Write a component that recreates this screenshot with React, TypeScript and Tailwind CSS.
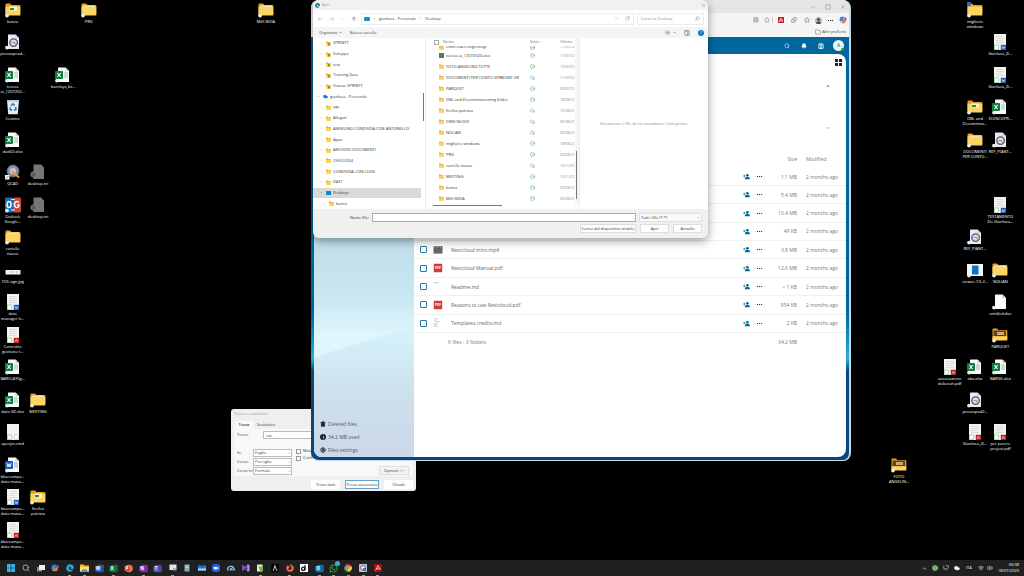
import React from 'react';
import {
  ArrowLeft,
  ArrowRight,
  ArrowUp,
  Bell,
  ChevronDown,
  ChevronRight,
  ChevronUp,
  CircleCheck,
  Cloud,
  Contact,
  Folder,
  LayoutGrid,
  List,
  Minus,
  PanelRight,
  Puzzle,
  RotateCw,
  Search,
  Settings,
  Square,
  Star,
  Trash2,
  Volume2,
  Wifi,
  X,
} from 'lucide-react';
import { FaFirefoxBrowser, FaEdge, FaWhatsapp } from 'react-icons/fa';

type IconKind =
  | 'folder'
  | 'folderDoc'
  | 'folderPhoto'
  | 'folderSync'
  | 'cad'
  | 'excel'
  | 'word'
  | 'docWord'
  | 'docPdf'
  | 'cmd'
  | 'blank'
  | 'bin'
  | 'qcad'
  | 'outlook'
  | 'ini'
  | 'strip'
  | 'viewer';

interface DesktopItem {
  col: number;
  row: number;
  kind: IconKind;
  label: string[];
}

const desktopItems: DesktopItem[] = [
  { col: 1, row: 1, kind: 'folderDoc', label: ['banca'] },
  { col: 4, row: 1, kind: 'folder', label: ['PRG'] },
  { col: 11, row: 1, kind: 'folder', label: ['MiH-NIDA'] },
  { col: 1, row: 2, kind: 'cad', label: ['provaspcad...'] },
  { col: 1, row: 3, kind: 'excel', label: ['teresa', 'ai_1207202...'] },
  { col: 3, row: 3, kind: 'excel', label: ['barclays_bc...'] },
  { col: 1, row: 4, kind: 'bin', label: ['Cestino'] },
  { col: 1, row: 5, kind: 'excel', label: ['dati02.xlsx'] },
  { col: 1, row: 6, kind: 'qcad', label: ['QCAD'] },
  { col: 2, row: 6, kind: 'ini', label: ['desktop.ini'] },
  { col: 1, row: 7, kind: 'outlook', label: ['Outlook', 'Google...'] },
  { col: 2, row: 7, kind: 'ini', label: ['desktop.ini'] },
  { col: 1, row: 8, kind: 'folder', label: ['cartelle', 'nuove'] },
  { col: 1, row: 9, kind: 'strip', label: ['1DS sign.jpg'] },
  { col: 1, row: 10, kind: 'docWord', label: ['data', 'manager ti...'] },
  { col: 1, row: 11, kind: 'docPdf', label: ['Contratto', 'gestione t...'] },
  { col: 1, row: 12, kind: 'excel', label: ['BARCLAYSg...'] },
  { col: 1, row: 13, kind: 'excel', label: ['data GZ.xlsx'] },
  { col: 2, row: 13, kind: 'folder', label: ['MEETING'] },
  { col: 1, row: 14, kind: 'cmd', label: ['specjvc.cmd'] },
  { col: 1, row: 15, kind: 'word', label: ['bluecompa...', 'data mana...'] },
  { col: 1, row: 16, kind: 'docWord', label: ['bluecompa...', 'data mana...'] },
  { col: 2, row: 16, kind: 'folderDoc', label: ['firefox', 'patrizia'] },
  { col: 1, row: 17, kind: 'docPdf', label: ['bluecompa...', 'data mana...'] },
  { col: 39, row: 1, kind: 'folderSync', label: ['migliorie', 'windows'] },
  { col: 40, row: 2, kind: 'docWord', label: ['Gianluca_Zi...'] },
  { col: 40, row: 3, kind: 'docWord', label: ['Gianluca_Zi...'] },
  { col: 39, row: 4, kind: 'folderDoc', label: ['DBL and', 'Decommiss...'] },
  { col: 40, row: 4, kind: 'excel', label: ['ELENCOPR...'] },
  { col: 39, row: 5, kind: 'folder', label: ['DOCUMENTI', 'PER CONTO...'] },
  { col: 40, row: 5, kind: 'cad', label: ['REF_PIANT...'] },
  { col: 40, row: 7, kind: 'docWord', label: ['TESTAMENTO', 'Zio Gianluca...'] },
  { col: 39, row: 8, kind: 'cad', label: ['REF_PIANT...'] },
  { col: 39, row: 9, kind: 'viewer', label: ['viewer-7.6.2...'] },
  { col: 40, row: 9, kind: 'folder', label: ['NOLIAN'] },
  { col: 40, row: 10, kind: 'blank', label: ['untitled.dxs'] },
  { col: 40, row: 11, kind: 'folderPhoto', label: ['PARQUET'] },
  { col: 38, row: 12, kind: 'docPdf', label: ['associazione', 'deborah.pdf'] },
  { col: 39, row: 12, kind: 'excel', label: ['xba.xlsx'] },
  { col: 40, row: 12, kind: 'excel', label: ['BARGE.xlsx'] },
  { col: 39, row: 13, kind: 'cad', label: ['provaspad2...'] },
  { col: 39, row: 14, kind: 'docPdf', label: ['Gianluca_Zi...'] },
  { col: 40, row: 14, kind: 'docPdf', label: ['per parere', 'project.pdf'] },
  { col: 36, row: 15, kind: 'folderPhoto', label: ['FOTO', 'ANGELIN...'] },
];

const treeItems = [
  { name: 'SPRINTT', icon: 'shared', chevron: true },
  { name: 'Sviluppo', icon: 'shared', chevron: true },
  { name: 'test', icon: 'shared', chevron: true },
  { name: 'Training-Sara', icon: 'shared', chevron: false },
  { name: 'Visioso SPRINTT', icon: 'shared', chevron: true },
  { name: 'gianluca - Personale', icon: 'cloud', chevron: true },
  { name: 'age', icon: 'folder', chevron: true },
  { name: 'Allegati', icon: 'folder', chevron: true },
  { name: 'ANGELINO CONDIVISA CON ANTONELLO', icon: 'folder', chevron: true },
  { name: 'Apps', icon: 'folder', chevron: true },
  { name: 'ARCHIVIO DOCUMENTI', icon: 'folder', chevron: true },
  { name: 'CHILE2024', icon: 'folder', chevron: true },
  { name: 'CONDIVISA CON LUIGI', icon: 'folder', chevron: true },
  { name: 'DATI', icon: 'folder', chevron: true },
  { name: 'Desktop', icon: 'desktop', chevron: true },
  { name: 'banca', icon: 'folder', chevron: true },
];

const dialogFiles = [
  { name: 'teresa ai_12072023.xlsx', synced: true, date: '11/07/2' },
  { name: 'FOTO ANGELINO TUTTE', synced: true, date: '10/07/2' },
  { name: 'DOCUMENTI PER CONTO VERMONT-VR', synced: false, date: '11/07/2' },
  { name: 'PARQUET', synced: true, date: '06/07/2' },
  { name: 'DBL and Decommissioning folder', synced: true, date: '18/06/2' },
  { name: 'firefox patrizia', synced: false, date: '15/06/2' },
  { name: 'DWG NUOVI', synced: false, date: '05/06/2' },
  { name: 'NOLIAN', synced: false, date: '05/06/2' },
  { name: 'migliorie windows', synced: true, date: '18/06/2' },
  { name: 'PRG', synced: true, date: '02/06/2' },
  { name: 'cartelle nuove', synced: false, date: '15/12/2' },
  { name: 'MEETING', synced: true, date: '12/12/2' },
  { name: 'banca', synced: true, date: '23/06/2' },
  { name: 'MiH-NIDA', synced: true, date: '05/06/2' },
];

const cloudFiles = [
  { id: 1, name: '', kind: 'folder', size: '1.1 MB' },
  { id: 2, name: '', kind: 'folder', size: '5.4 MB' },
  { id: 3, name: '', kind: 'folder', size: '10.4 MB' },
  { id: 4, name: '', kind: 'text', size: '49 KB' },
  { id: 5, name: 'Nextcloud intro.mp4', kind: 'video', size: '3.8 MB' },
  { id: 6, name: 'Nextcloud Manual.pdf', kind: 'pdf', size: '12.6 MB' },
  { id: 7, name: 'Readme.md', kind: 'readme', size: '< 1 KB' },
  { id: 8, name: 'Reasons to use Nextcloud.pdf', kind: 'pdf', size: '954 KB' },
  { id: 9, name: 'Templates credits.md', kind: 'text', size: '2 KB' },
];

const DesktopIcon: React.FC<{ kind: IconKind }> = ({ kind }) => {
  const isFolder = kind.startsWith('folder');
  const isPage = ['cad', 'excel', 'word', 'blank'].includes(kind);
  const isDoc = ['docWord', 'docPdf', 'cmd'].includes(kind);

  return (
    <svg viewBox="0 0 16 16" className="size-4 shrink-0" aria-hidden="true">
      {isFolder && (
        <>
          <path d="M0.5 2.5Q0.5 1.5 1.5 1.5H5L6.5 3H14.5Q15.3 3 15.3 4V12H0.5Z" fill="#e8a01c" />
          {kind === 'folder' && <path d="M2 3.5H14V8H2Z" fill="#f4ead2" />}
          {kind === 'folderPhoto' && <path d="M1.5 3.5H14V9H1.5Z" fill="#5b4228" />}
          <path d={kind === 'folderPhoto' ? 'M0.5 9.5H15.3V13.5H0.5Z' : 'M0.5 4.6H15.3V13.5H0.5Z'} fill="#fcd462" />
          {kind === 'folderPhoto' && <path d="M5 5H12V8H5Z" fill="#c9ab82" />}
          {kind === 'folderDoc' && (
            <>
              <path d="M4.5 4.5H12V8.5H4.5Z" fill="#f5f1dc" />
              <path d="M5 6H9V8H5Z" fill="#288f55" />
            </>
          )}
          {kind === 'folderSync' && <circle cx="2" cy="2" r="2.2" fill="#1976d2" />}
        </>
      )}
      {isPage && (
        <path d="M3 1Q3 0.5 3.5 0.5H10.5L14 4V14.5Q14 15 13.5 15H3.5Q3 15 3 14.5Z" fill={kind === 'cad' ? '#e9e9ef' : '#fbfbfb'} />
      )}
      {isPage && <path d="M10.5 0.5V4H14Z" fill="#c9cdd0" />}
      {kind === 'excel' && (
        <>
          <path d="M9 6H13M9 8H13M9 10H13" stroke="#8cc5a6" strokeWidth="1" />
          <rect x="0" y="4" width="8" height="8" rx="0.8" fill="#107c41" />
          <path d="M2.4 6L5.6 10M5.6 6L2.4 10" stroke="#fff" strokeWidth="1.1" />
        </>
      )}
      {kind === 'word' && (
        <>
          <path d="M9 6H13M9 8H13M9 10H13" stroke="#7fa4d8" strokeWidth="1" />
          <rect x="0" y="4" width="8" height="8" rx="0.8" fill="#185abd" />
          <path d="M1.8 6L2.9 10L4 6.8L5.1 10L6.2 6" stroke="#fff" strokeWidth="0.9" fill="none" />
        </>
      )}
      {kind === 'cad' && (
        <>
          <circle cx="8.6" cy="8.6" r="3.8" fill="#d8dcea" stroke="#4d5685" strokeWidth="1.3" />
          <path d="M6.5 8.5H10.5M9 9L12 12" stroke="#c78a55" strokeWidth="0.9" />
        </>
      )}
      {isDoc && (
        <>
          <rect x="2" y="0" width="12" height="16" fill="#f3f3f1" />
          {kind !== 'cmd' && (
            <path d="M4 2.5H11M4 4.5H12M4 6.5H10M4 8.5H12" stroke="#c9cbcd" strokeWidth="0.6" />
          )}
          <rect x="2.5" y="11" width="4" height="4.5" fill="#fff" stroke="#79bf8c" strokeWidth="0.6" />
          {kind === 'docWord' && <rect x="8.8" y="10.8" width="5.2" height="5.2" fill="#1e62c4" />}
          {kind === 'docPdf' && <rect x="8.8" y="10.8" width="5.2" height="5.2" fill="#c5161d" />}
          {kind === 'docWord' && <path d="M10 12.2L10.8 14.6L11.4 13L12 14.6L12.8 12.2" stroke="#fff" strokeWidth="0.5" fill="none" />}
          {kind === 'docPdf' && <path d="M9.8 15L11.4 12L13 14.3L10.4 13.8" stroke="#fff" strokeWidth="0.5" fill="none" />}
          {kind === 'cmd' && <path d="M9.5 10.5H12L13.2 12V15.3H9.5Z" fill="#fff" stroke="#a8acb0" strokeWidth="0.5" />}
        </>
      )}
      {kind === 'bin' && (
        <>
          <path d="M2 1H14L12.8 15.2H3.2Z" fill="#e3ebf0" />
          <path d="M2 1H14V2.4H2.2Z" fill="#b8c8d2" />
          <path d="M6 6.8L8 4.8L9.7 6.6M10.6 8L11 10.5L9 11.2M7.2 11.2L5 10.4L5.4 8.4" stroke="#1779d4" strokeWidth="1.5" fill="none" />
        </>
      )}
      {kind === 'qcad' && (
        <>
          <circle cx="8" cy="7" r="6" fill="#878ea6" stroke="#5a6180" strokeWidth="1" />
          <circle cx="8" cy="7" r="3" fill="#c2c8da" />
          <path d="M7 7L14 13.5" stroke="#e39b35" strokeWidth="2" />
          <rect x="0" y="11" width="4.5" height="4.5" fill="#fff" />
          <path d="M1 14.5L3.4 12" stroke="#1a67c2" strokeWidth="0.8" />
        </>
      )}
      {kind === 'outlook' && (
        <>
          <rect x="0" y="0.5" width="8" height="15" rx="1" fill="#1670b8" />
          <rect x="8" y="0.5" width="8" height="15" rx="1" fill="#cf4734" />
          <ellipse cx="4" cy="7.5" rx="2" ry="3" fill="none" stroke="#fff" strokeWidth="1.5" />
          <path d="M13.8 5.6A2.4 3 0 1 0 13.8 9.4V7.8H12.3" fill="none" stroke="#fff" strokeWidth="1.4" />
          <path d="M6 2.5H10M6 13H10" stroke="#fff" strokeWidth="0.9" />
        </>
      )}
      {kind === 'ini' && (
        <>
          <path d="M3.5 0.5H11L14 3.5V15H3.5Z" fill="#767676" />
          <circle cx="3.6" cy="10.5" r="2.8" fill="#5c5c5c" stroke="#8b8b8b" strokeWidth="0.7" />
        </>
      )}
      {kind === 'strip' && (
        <>
          <rect x="0.5" y="8" width="15" height="4.5" fill="#f0f3ef" />
          <path d="M5 10H7M8 10H10M11 10H13" stroke="#8c9a8f" strokeWidth="0.7" />
        </>
      )}
      {kind === 'viewer' && (
        <>
          <rect x="0" y="2" width="16" height="12" fill="#f4f7fa" />
          <rect x="5" y="3.5" width="6.5" height="9" fill="#1272c8" />
        </>
      )}
      {!isDoc && !['bin', 'qcad', 'ini', 'strip'].includes(kind) && <circle cx="2" cy="13.6" r="1.9" fill="#dff2e3" />}
    </svg>
  );
};

const SmallFolder: React.FC<{ shared?: boolean }> = ({ shared }) => (
  <svg viewBox="0 0 12 12" className="size-[5px] shrink-0" aria-hidden="true">
    <path d="M0 1H4.5L6 3H12V11H0Z" fill="#eab02f" />
    <path d="M0 4.5H12V11H0Z" fill="#fbd35c" />
    {shared && <path d="M5 5H9V11H5Z" fill="#6f8d34" />}
  </svg>
);

const ShareIcon = () => (
  <svg viewBox="0 0 24 24" className="size-[7px] fill-[#00679e]" aria-hidden="true">
    <circle cx="15" cy="8" r="4.5" />
    <path d="M6.5 21V18C6.5 12.5 23.5 12.5 23.5 18V21ZM0 9H3V6H5.5V9H8.5V11.5H5.5V14.5H3V11.5H0Z" />
  </svg>
);

const FileIcon: React.FC<{ kind: string }> = ({ kind }) => (
  <svg viewBox="0 0 10 10" className="size-[10px]" aria-hidden="true">
    {kind === 'folder' && <path d="M0 1H4L5 2.5H10V9H0Z" fill="#00679e" />}
    {kind === 'video' && (
      <>
        <rect x="0.5" y="1" width="9" height="7.6" fill="#666" />
        <path d="M1.4 1L2.4 2.6M4 1L5 2.6M6.6 1L7.6 2.6" stroke="#ddd" strokeWidth="0.8" />
      </>
    )}
    {kind === 'pdf' && (
      <>
        <rect x="0.8" y="0.8" width="8.4" height="8.4" rx="0.6" fill="#d5383b" />
        <text x="5" y="6.2" textAnchor="middle" fontSize="3.2" fontWeight="700" fill="#fff">PDF</text>
      </>
    )}
    {kind === 'readme' && <path d="M1 0.7H6" stroke="#aaa" strokeWidth="0.6" />}
    {kind === 'text' && (
      <path d="M1 0.8H5M1 2.5H3M3.5 3.5H6.5M1 5H5M1 6.6H4M1 8.2H5.5" stroke="#aaa" strokeWidth="0.6" />
    )}
  </svg>
);

const Dots: React.FC = () => (
  <svg viewBox="0 0 7 3" className="h-[3px] w-[7px]" aria-hidden="true">
    <path d="M1 1.5h1.1M3 1.5h1.1M5 1.5h1.1" stroke="#333" strokeWidth="1.1" />
  </svg>
);

const CopilotIcon = () => (
  <svg viewBox="0 0 10 10" className="size-2" aria-hidden="true">
    <path d="M3 1H6.5L4.5 7L1.5 6.5Q0 6.5 0.7 4.5L1.5 2Q2 1 3 1Z" fill="#2b8ff0" />
    <path d="M7 1.5H8.3Q9.8 1.8 9.3 4L8.6 6.5L6 6Z" fill="#a455d8" />
    <path d="M5.5 4L8.6 6Q8 9 6.8 9H3.5L5 4.5Z" fill="#f07844" />
    <path d="M1.5 6.5L4 6.8L3.4 9Q1.8 9 1.5 6.5Z" fill="#f3c33d" />
  </svg>
);

const ChromeIcon = () => (
  <svg viewBox="0 0 8 8" className="size-2" aria-hidden="true">
    <path d="M4 4L0.54 2A4 4 0 0 1 7.46 2Z" fill="#e33b2e" />
    <path d="M4 4L7.46 2A4 4 0 0 1 4 8Z" fill="#fbc116" />
    <path d="M4 4V8A4 4 0 0 1 0.54 2Z" fill="#2ca24c" />
    <circle cx="4" cy="4" r="1.6" fill="#2f7de9" stroke="#fff" strokeWidth="0.6" />
  </svg>
);

const BrowserWindow = () => (
  <section
    aria-label="Browser"
    className="absolute top-0 right-[173px] bottom-[115px] left-[311px] flex flex-col overflow-hidden rounded-lg border-r-2 border-b border-[#c4dbe7] bg-[#f5f5f5]"
  >
    <div className="flex h-[13px] shrink-0 items-center justify-end gap-[9px] bg-[#e6e6e6] pr-[3px] text-[#858585]">
      <button aria-label="Minimize"><Minus className="size-[6px]" strokeWidth={1.5} /></button>
      <button aria-label="Maximize"><Square className="size-[6px]" strokeWidth={2} /></button>
      <button aria-label="Close"><X className="size-[6px]" strokeWidth={2} /></button>
    </div>
    <div className="flex h-[14px] shrink-0 items-center justify-end gap-[5px] pr-0.5 text-[#555]">
      <button aria-label="Apps"><LayoutGrid className="size-[6px]" strokeWidth={1.5} /></button>
      <button aria-label="Add to favorites" className="border-r border-[#ccc] pr-0.5">
        <Star className="size-[6px]" strokeWidth={1.5} />
      </button>
      <button aria-label="Acrobat" className="flex size-[6px] items-center justify-center bg-[#c91c1c]">
        <svg viewBox="0 0 6 6" className="size-[6px]"><path d="M1 5L3 1L4.8 4.2L2 3.6" stroke="#fff" strokeWidth="0.7" fill="none" /></svg>
      </button>
      <button aria-label="Extensions" className="ml-0.5"><Puzzle className="size-[6px]" /></button>
      <button aria-label="Favorites" className="ml-0.5"><Star className="size-[6px]" /></button>
      <button aria-label="Profile" className="flex size-[7px] items-end justify-center overflow-hidden rounded-full bg-[#bbb]">
        <svg viewBox="0 0 8 8" className="size-[7px]"><circle cx="4" cy="3" r="1.6" fill="#444" /><path d="M1 8Q1 5 4 5T7 8Z" fill="#444" /></svg>
      </button>
      <button aria-label="More"><Dots /></button>
      <button aria-label="Copilot"><CopilotIcon /></button>
    </div>
    <div className="flex h-[10px] shrink-0 items-center justify-end gap-px pr-[3px]">
      <Folder className="size-[6px] text-[#333]" strokeWidth={1.5} />
      <a href="#favorites" className="text-[4px] text-[#333]">Altri preferiti</a>
    </div>

    <div className="flex min-h-0 flex-1 flex-col bg-linear-to-b from-[#00679e] from-65% via-[#22b2dc] via-76% to-[#084680] to-79% px-[3px] pb-[3px]">
      <header className="flex h-[17px] shrink-0 items-center justify-end gap-[11px] bg-[#00679e] pr-0.5 text-white">
        <button aria-label="Search"><Search className="size-[6px]" /></button>
        <button aria-label="Notifications"><Bell className="size-[6px] fill-white" /></button>
        <button aria-label="Contacts"><Contact className="size-[6px]" strokeWidth={3} /></button>
        <button
          aria-label="Account"
          className="relative -ml-0.5 flex size-[11px] items-center justify-center rounded-full bg-[#e8f2f8] text-[5px] text-[#00679e]"
        >
          A
          <span className="absolute right-0 bottom-0 size-[3px] rounded-full bg-[#3a8f32]" />
        </button>
      </header>

      <div className="flex min-h-0 flex-1 overflow-hidden rounded-lg bg-white">
        <nav className="relative flex w-[100px] shrink-0 flex-col justify-end gap-[5px] pb-[3px] pl-[6px] text-[5px] leading-2 text-[#4e5964]">
          <svg viewBox="0 0 100 404" preserveAspectRatio="none" className="absolute inset-0 size-full" aria-hidden="true">
            <defs>
              <linearGradient id="sky" x1="0" y1="0" x2="0" y2="1">
                <stop offset="0.45" stopColor="#bfdde9" />
                <stop offset="0.6" stopColor="#c8e7f1" />
                <stop offset="0.7" stopColor="#dff6fd" />
              </linearGradient>
              <linearGradient id="hill" x1="0" y1="0" x2="0" y2="1">
                <stop offset="0" stopColor="#d6f4fb" />
                <stop offset="0.5" stopColor="#cde0ed" />
                <stop offset="1" stopColor="#ccd7e7" />
              </linearGradient>
            </defs>
            <rect width="100" height="404" fill="url(#sky)" />
            <path d="M0 305Q50 286 100 274V404H0Z" fill="url(#hill)" />
          </svg>
          <a href="#trash" className="relative flex items-center gap-[2px]">
            <Trash2 className="size-[6px] fill-[#1c2733] text-[#1c2733]" />
            Deleted files
          </a>
          <a href="#quota" className="relative flex items-center gap-[2px]">
            <span className="flex size-[6px] items-center justify-center rounded-full bg-[#1c2733]">
              <span className="h-[3px] w-px bg-[#8da0b0]" />
            </span>
            34.2 MB used
          </a>
          <a href="#settings" className="relative flex items-center gap-[2px]">
            <Settings className="size-[6px] text-[#1c2733]" strokeWidth={4} />
            Files settings
          </a>
        </nav>

        <main className="flex min-w-0 flex-1 flex-col text-[5px] leading-2 text-[#7a7a7a]">
          <div className="flex h-4 items-center justify-end pr-1">
            <button aria-label="Grid view">
              <svg viewBox="0 0 7 7" className="size-[7px]"><path d="M0 0H3V3H0ZM4 0H7V3H4ZM0 4H3V7H0ZM4 4H7V7H4Z" fill="#222" /></svg>
            </button>
          </div>
          <div className="flex h-[80px] flex-col items-end gap-[38px] pt-[14px] pr-4">
            <ChevronUp className="size-1 text-[#333]" strokeWidth={5} />
            <ChevronDown className="size-1 text-[#777]" strokeWidth={4} />
          </div>
          <table className="h-[183px] w-full table-fixed border-collapse">
            <thead>
              <tr className="h-[18px]">
                <th className="w-[19px]" aria-label="Select" />
                <th className="w-[18px]" aria-label="Type" />
                <th aria-label="Name" />
                <th className="w-[13px]" aria-label="Share" />
                <th className="w-[10px]" aria-label="Actions" />
                <th className="w-[31px] text-right font-normal">Size</th>
                <th className="w-[49px] pl-[9px] text-left font-normal">Modified</th>
              </tr>
            </thead>
            <tbody>
              {cloudFiles.map((file) => (
                <tr key={file.id} className="border-b border-[#f0f0f0]">
                  <td className="pl-[6px]">
                    <input
                      type="checkbox"
                      aria-label={`Select ${file.name}`}
                      className="block size-[7px] appearance-none rounded-[1px] border border-[#2478a8]"
                    />
                  </td>
                  <td><FileIcon kind={file.kind} /></td>
                  <td className="truncate text-[#666]">{file.name}</td>
                  <td><button aria-label="Share" className="block"><ShareIcon /></button></td>
                  <td><button aria-label="Actions" className="block"><Dots /></button></td>
                  <td className="text-right">{file.size}</td>
                  <td className="pl-[9px] whitespace-nowrap">2 months ago</td>
                </tr>
              ))}
            </tbody>
          </table>
          <div className="flex h-[18px] items-center justify-between pr-[49px] pl-[34px]">
            <span>6 files - 3 folders</span>
            <span>34.2 MB</span>
          </div>
        </main>
      </div>
    </div>
  </section>
);

const OpenDialog = () => (
  <section
    role="dialog"
    aria-label="Apri"
    className="absolute top-0 left-[313px] flex w-[395px] flex-col overflow-hidden rounded-md bg-[#f0f0f0] text-[4px] leading-[6px] text-[#333] shadow-[0_3px_10px_rgba(0,0,0,0.4)]"
  >
    <div className="flex h-[10px] items-center gap-[2px] bg-[#f1f1f1] px-0.5">
      <FaEdge className="size-[5px] text-[#0b7c9e]" />
      <span className="flex-1 text-[#999]">Apri</span>
      <button aria-label="Chiudi"><X className="size-[5px] text-[#777]" /></button>
    </div>

    <div className="flex h-[17px] items-center bg-white pr-1 pl-1">
      <div className="flex items-center gap-[6px] text-[#aaa]">
        <button aria-label="Indietro"><ArrowLeft className="size-[6px]" /></button>
        <button aria-label="Avanti"><ArrowRight className="size-[6px]" /></button>
        <button aria-label="Recenti"><ChevronDown className="size-1" /></button>
        <button aria-label="Su"><ArrowUp className="size-[6px] text-[#444]" /></button>
      </div>
      <div className="ml-1 flex h-[12px] flex-1 items-center gap-[3px] border border-[#ececec] pr-[3px] pl-[2px]">
        <span className="h-1 w-[6px] rounded-[1px] bg-[#1793bd]" />
        <ChevronRight className="size-[3px]" />
        <span>gianluca - Personale</span>
        <ChevronRight className="size-[3px]" />
        <span className="flex-1">Desktop</span>
        <ChevronDown className="size-[5px] text-[#999]" />
        <RotateCw className="ml-[3px] size-[5px] text-[#888]" />
      </div>
      <div className="ml-[3px] flex h-[12px] w-[67px] items-center border border-[#ececec] px-[3px]">
        <input aria-label="Cerca" placeholder="Cerca in Desktop" className="min-w-0 flex-1 placeholder:text-[#8a8a8a]" />
        <Search className="size-[5px] -scale-x-100 text-[#777]" />
      </div>
    </div>

    <div className="flex h-[11px] items-center gap-2 bg-[#f4f5f7] pr-1 pl-[6px] text-[#34495e]">
      <button className="flex items-center gap-px">Organizza <ChevronDown className="size-[3px]" strokeWidth={4} /></button>
      <button className="flex-1 text-left">Nuova cartella</button>
      <button aria-label="Visualizza" className="flex items-center gap-[3px]">
        <List className="size-[5px]" />
        <ChevronDown className="size-[3px]" strokeWidth={4} />
      </button>
      <button aria-label="Anteprima"><PanelRight className="size-[6px]" /></button>
      <button aria-label="Guida" className="flex size-[6px] items-center justify-center rounded-full bg-[#1177bd] text-white">?</button>
    </div>

    <div className="flex h-[171px] bg-white">
      <div className="flex w-[108px] flex-col">
        {treeItems.map((item) => {
          const selected = item.name === 'Desktop';
          const open = selected || item.icon === 'cloud';
          const indent = item.name === 'banca' ? 'pl-[10px]' : open && !selected ? 'pl-1' : 'pl-[7px]';
          return (
            <div key={item.name} className={`flex flex-1 items-center gap-[2px] ${indent} ${selected ? 'bg-[#d9d9d9]' : ''}`}>
              <span className="flex w-1 shrink-0 text-[#777]">
                {item.chevron && (open ? <ChevronDown className="size-[3px]" strokeWidth={3} /> : <ChevronRight className="size-[3px]" />)}
              </span>
              {item.icon === 'cloud' && <Cloud className="size-[5px] shrink-0 fill-[#1b78d0] text-[#1b78d0]" />}
              {item.icon === 'desktop' && <span className="h-1 w-[5px] shrink-0 bg-[#1788bd]" />}
              {(item.icon === 'folder' || item.icon === 'shared') && <SmallFolder shared={item.icon === 'shared'} />}
              <span className="whitespace-nowrap">{item.name}</span>
            </div>
          );
        })}
      </div>
      <div className="w-[5px] border-r border-[#eee] pt-[55px]">
        <div className="mx-auto h-7 w-px bg-[#777]" />
      </div>

      <div className="flex flex-1 flex-col">
        <div className="flex h-[167px] overflow-hidden">
          <table className="flex-1 table-fixed border-collapse self-start">
            <thead className="text-[#777]">
              <tr className="h-2">
                <th className="w-[13px] pl-2">
                  <input type="checkbox" aria-label="Seleziona tutto" className="block size-[5px] appearance-none border border-[#aaa]" />
                </th>
                <th className="w-[90px] pl-1 text-left font-normal">Nome</th>
                <th className="w-[31px] pl-px text-left font-normal">Stato</th>
                <th className="text-left font-normal">Ultima</th>
              </tr>
            </thead>
            <tbody>
              <tr>
                <td />
                <td><div className="flex h-1 items-end overflow-hidden whitespace-nowrap"><SmallFolder /><span className="pl-[2px]">DWG DBLS angelinogi</span></div></td>
                <td className="pl-px"><div className="flex h-1 items-end overflow-hidden"><CircleCheck className="size-[5px] shrink-0 text-[#555]" /></div></td>
                <td className="text-[#888]"><div className="flex h-1 items-end overflow-hidden">11/07/2</div></td>
              </tr>
              {dialogFiles.map((file) => (
                <tr key={file.name} className="h-[11px]">
                  <td />
                  <td>
                    <div className="flex items-center gap-[2px] whitespace-nowrap">
                      {file.name.endsWith('.xlsx') ? <span className="size-[5px] bg-[#4c8064]" /> : <SmallFolder />}
                      <span>{file.name}</span>
                    </div>
                  </td>
                  <td className="pl-px">
                    {file.synced ? (
                      <CircleCheck className="size-[5px] text-[#35945a]" strokeWidth={2} />
                    ) : (
                      <Cloud className="size-[5px] text-[#3986a8]" strokeWidth={2} />
                    )}
                  </td>
                  <td className="text-[#888]">{file.date}</td>
                </tr>
              ))}
            </tbody>
          </table>
          <div className="w-[3px] bg-[#f6f6f6] pt-[113px]">
            <div className="mx-auto h-12 w-px bg-[#777]" />
          </div>
        </div>
        <div className="ml-[7px] h-px w-[69px] bg-[#777]" />
      </div>

      <div className="flex w-[130px] items-center justify-center border-l-2 border-[#f1f1f1] text-[#888]">
        Selezionare il file di cui visualizzare l'anteprima.
      </div>
    </div>

    <div className="flex flex-col gap-[2px] px-[6px] pt-1 pb-[5px]">
      <div className="flex items-center justify-end gap-[3px]">
        <label htmlFor="filename">Nome file:</label>
        <input id="filename" className="h-[9px] w-[264px] border border-[#aaa] bg-white" />
        <div className="relative flex w-[63px] items-center">
          <select aria-label="Tipo file" className="h-[9px] w-full appearance-none border border-[#e0e0e0] bg-[#fafafa] px-px">
            <option>Tutti i file (*.*)</option>
          </select>
          <ChevronDown className="absolute right-[2px] size-[3px]" />
        </div>
      </div>
      <div className="flex justify-end gap-1">
        <button className="h-[9px] w-[56px] border border-[#ddd] bg-[#fdfdfd] whitespace-nowrap">Carica dal dispositivo mobile</button>
        <button className="h-[9px] w-[29px] border border-[#ddd] bg-[#fdfdfd]">Apri</button>
        <button className="h-[9px] w-[29px] border border-[#ddd] bg-[#fdfdfd]">Annulla</button>
      </div>
    </div>
  </section>
);

const findOptions = [
  { id: 'within', label: 'In:', value: 'Foglio' },
  { id: 'order', label: 'Cerca:', value: 'Per righe' },
  { id: 'lookin', label: 'Cerca in:', value: 'Formule' },
];

const FindDialog = () => (
  <section
    role="dialog"
    aria-label="Trova e sostituisci"
    className="absolute top-[409px] left-[231px] flex w-[185px] flex-col rounded-[3px] bg-[#efefef] px-[3px] pt-[2px] pb-[2px] text-[4px] leading-[6px] text-[#333]"
  >
    <h2 className="h-[10px] text-[#999]">Trova e sostituisci</h2>
    <div className="flex h-2">
      <button className="w-5 bg-[#f8f8f8] font-semibold">Trova</button>
      <button className="w-6">Sostituisci</button>
    </div>
    <div className="flex flex-col bg-[#f8f8f8] px-[3px] pt-[2px] pb-px">
      <div className="flex items-center">
        <label htmlFor="find" className="w-[26px]">Trova:</label>
        <input id="find" defaultValue="rav" className="h-2 min-w-0 flex-1 border border-[#bbb] bg-white px-[2px]" />
      </div>
      <div className="mt-2 flex items-start gap-1">
        <div className="flex flex-col gap-px pt-[2px]">
          {findOptions.map((option) => (
            <div key={option.id} className="relative flex items-center">
              <label htmlFor={option.id} className="w-4 whitespace-nowrap">{option.label}</label>
              <select id={option.id} className="h-2 w-[39px] appearance-none border border-[#bbb] bg-white px-px">
                <option>{option.value}</option>
              </select>
              <ChevronDown className="absolute right-px size-[3px]" />
            </div>
          ))}
        </div>
        <div className="flex flex-1 flex-col gap-px pt-px">
          {['Maiu', 'Confr'].map((label) => (
            <label key={label} className="flex items-center gap-[2px] whitespace-nowrap">
              <input type="checkbox" className="size-[5px] appearance-none border border-[#999] bg-white" />
              {label}
            </label>
          ))}
        </div>
        <button className="mr-px h-[9px] w-[30px] self-end border border-[#ddd] bg-[#f3f3f3]">Opzioni &gt;&gt;</button>
      </div>
    </div>
    <div className="flex justify-end gap-[5px] pt-1">
      <button className="h-[9px] w-[29px] bg-[#fdfdfd]">Trova tutti</button>
      <button className="h-[9px] w-[34px] border border-[#64a3c9] bg-[#fdfdfd] whitespace-nowrap">Trova successivo</button>
      <button className="h-[9px] w-[29px] bg-[#fdfdfd]">Chiudi</button>
    </div>
  </section>
);

const LetterTile: React.FC<{ letter: string; color: string }> = ({ letter, color }) => (
  <svg viewBox="0 0 9 9" className="size-[9px]" aria-hidden="true">
    <rect x="2" y="0.8" width="6.8" height="7.4" rx="1" fill={color} opacity="0.7" />
    <rect x="0.4" y="2" width="5.4" height="5.4" rx="0.6" fill={color} />
    <text x="3.1" y="6.3" textAnchor="middle" fontSize="4.6" fontWeight="700" fill="#fff">{letter}</text>
  </svg>
);

const taskbarApps: { name: string; icon: React.ReactNode; running?: boolean }[] = [
  {
    name: 'Start',
    icon: <svg viewBox="0 0 8 8" className="size-2"><path d="M0 0H3.7V3.7H0ZM4.3 0H8V3.7H4.3ZM0 4.3H3.7V8H0ZM4.3 4.3H8V8H4.3Z" fill="#37b8f2" /></svg>,
  },
  { name: 'Search', icon: <Search className="size-2 text-[#ddd]" /> },
  {
    name: 'Task view',
    icon: <svg viewBox="0 0 8 8" className="size-2"><path d="M0 3H5V7.5H0Z" fill="#888" /><path d="M2 1H8V6H2Z" fill="#eee" /></svg>,
  },
  { name: 'Copilot', icon: <CopilotIcon /> },
  { name: 'Edge', icon: <FaEdge className="size-2 text-[#27a9cf]" />, running: true },
  {
    name: 'Explorer',
    icon: <svg viewBox="0 0 9 8" className="h-2 w-[9px]"><path d="M0 0.5H3.5L4.5 1.5H9V7.5H0Z" fill="#f4b82e" /><path d="M0 3H9V7.5H0Z" fill="#fddc73" /><path d="M2 5.5H7V7.5H2Z" fill="#2f8fd6" /></svg>,
    running: true,
  },
  { name: 'Word', icon: <LetterTile letter="W" color="#2b6fd0" /> },
  { name: 'Excel', icon: <LetterTile letter="X" color="#16884b" />, running: true },
  {
    name: 'PowerPoint',
    icon: <svg viewBox="0 0 9 9" className="size-[9px]"><circle cx="5" cy="4.5" r="3.8" fill="#ee7a55" /><path d="M0.4 2H5.6V7.2H0.4Z" fill="#c8411f" /><text x="3" y="6.3" textAnchor="middle" fontSize="4.6" fontWeight="700" fill="#fff">P</text></svg>,
  },
  { name: 'OneNote', icon: <LetterTile letter="N" color="#9a35bd" />, running: true },
  { name: 'Teams', icon: <LetterTile letter="T" color="#5660c4" /> },
  {
    name: 'Snipping tool',
    icon: <svg viewBox="0 0 8 8" className="size-2"><path d="M0.5 0.5H7.5V6H0.5Z" fill="#e3e5e8" /><path d="M4 4L7 7.5M7 4L4 7.5" stroke="#5a8bc0" strokeWidth="0.9" /></svg>,
    running: true,
  },
  {
    name: 'Server manager',
    icon: <svg viewBox="0 0 8 8" className="size-2"><path d="M1.5 0.5H6.5V7.5H1.5Z" fill="#8ea9b5" /><path d="M2.5 2H5.5M2.5 3.5H5.5" stroke="#e0eaf0" strokeWidth="0.7" /></svg>,
  },
  {
    name: 'Remote',
    icon: <svg viewBox="0 0 8 8" className="size-2"><path d="M0 1.5H3.8V6.5H0ZM4.2 1.5H8V6.5H4.2Z" fill="#1c7bd4" /><path d="M0 4.5H8V6.5H0Z" fill="#aadcf5" /></svg>,
  },
  {
    name: 'Zoom',
    icon: <svg viewBox="0 0 8 8" className="size-2"><rect width="8" height="8" rx="3" fill="#1f63f0" /><path d="M1.8 3H5V5.3H1.8ZM5.3 3.8L6.5 3V5.3L5.3 4.6Z" fill="#fff" /></svg>,
  },
  {
    name: 'NAS',
    icon: <svg viewBox="0 0 8 8" className="size-2"><path d="M1 6.5Q0 3 3 2.5Q6.5 1.5 7.5 6.5M3 6.5Q4 2.5 5.5 6.5" stroke="#9fe0f2" strokeWidth="1.2" fill="none" /></svg>,
  },
  {
    name: 'Visual Studio',
    icon: <svg viewBox="0 0 8 8" className="size-2"><path d="M0.8 2L5.8 6.8V1.2L0.8 6Z" fill="none" stroke="#9255cf" strokeWidth="1.2" /><path d="M5.5 0.2L7.6 1.2V6.8L5.5 7.8Z" fill="#b684e8" /></svg>,
  },
  {
    name: 'Notepad++',
    icon: <svg viewBox="0 0 8 8" className="size-2"><path d="M1 0.5H6.5V7.5H1Z" fill="#e5edda" /><path d="M2.5 2.5H7V7H4Z" fill="#79b53d" /></svg>,
    running: true,
  },
  {
    name: 'Autodesk',
    icon: <svg viewBox="0 0 8 8" className="size-2"><rect width="8" height="8" fill="#050505" /><path d="M2.2 6.8L4 1.5L5.8 6.8" stroke="#ddd" strokeWidth="0.9" fill="none" /></svg>,
  },
  { name: 'Firefox', icon: <FaFirefoxBrowser className="size-2 text-[#f4693a]" />, running: true },
  {
    name: 'Dext',
    icon: <svg viewBox="0 0 8 8" className="size-2"><path d="M0 0H8V8H0Z" fill="#fff" /><circle cx="3.2" cy="4.8" r="1.6" fill="#fff" stroke="#111" strokeWidth="1.3" /><path d="M5 1V6.5" stroke="#111" strokeWidth="1.2" /></svg>,
  },
  { name: 'Outlook', icon: <LetterTile letter="O" color="#1681d3" />, running: true },
  { name: 'WhatsApp', icon: <FaWhatsapp className="size-[9px] text-[#2bc757]" />, running: true },
  { name: 'Chrome', icon: <ChromeIcon />, running: true },
  {
    name: 'Paint',
    icon: <svg viewBox="0 0 8 8" className="size-2"><rect width="8" height="8" rx="1" fill="#aec9e6" /><circle cx="4" cy="3.8" r="2.3" fill="#fff" stroke="#c84438" strokeWidth="1" /><path d="M4 4H7V7H4Z" fill="#3578c9" /></svg>,
    running: true,
  },
  {
    name: 'Acrobat',
    icon: <svg viewBox="0 0 8 8" className="size-2"><rect width="8" height="8" rx="1" fill="#b30b0b" /><path d="M1.6 6.3L4 1.6L6.2 5.2L2.4 4.8" stroke="#fff" strokeWidth="0.7" fill="none" /></svg>,
    running: true,
  },
];

const Taskbar = () => (
  <footer className="flex h-4 shrink-0 items-center justify-between bg-[#202020] pr-[5px] pl-1 text-[4px] leading-[6px] text-white">
    <div className="grid h-4 w-[381px] grid-cols-[repeat(26,minmax(0,1fr))]">
      {taskbarApps.map((app) => (
        <button key={app.name} aria-label={app.name} className="relative flex items-center justify-center">
          {app.icon}
          {app.name === 'WhatsApp' && <span className="absolute top-px right-px size-[5px] rounded-full bg-[#3fa9d8]" />}
          {app.running && <span className="absolute bottom-0 h-px w-[3px] bg-[#999]" />}
        </button>
      ))}
    </div>
    <div className="flex items-center gap-[5px]">
      <ChevronUp className="size-[5px]" strokeWidth={3} />
      <CircleCheck className="size-[6px] fill-[#4ea32b]" />
      <svg viewBox="0 0 8 8" className="size-[6px]"><path d="M1 1V5H4M4 1H7V4L5 6H3" stroke="#bbb" strokeWidth="1" fill="none" /></svg>
      <Cloud className="size-[6px] fill-white" />
      <span className="px-px">ITA</span>
      <div className="flex gap-[3px]">
        <Wifi className="size-[6px]" />
        <Volume2 className="size-[6px]" />
      </div>
      <time className="text-right">
        00:08
        <br />
        18/07/2023
      </time>
    </div>
  </footer>
);

const App: React.FC = () => {
  return (
    <div className="relative flex min-h-screen flex-col overflow-hidden bg-black font-['Open_Sans','Noto_Sans',sans-serif]">
      {/* Desktop icons */}
      <div className="grid flex-1 grid-cols-[repeat(40,minmax(0,1fr))] grid-rows-[repeat(17,minmax(0,1fr))] pt-[2px] pr-[11px] pb-[6px]">
        {desktopItems.map((item) => (
          <button
            key={`${item.col}-${item.row}`}
            className="flex h-0 flex-col items-center text-center text-[4px] leading-[5px] whitespace-nowrap text-white"
            style={{ gridColumn: item.col, gridRow: item.row }}
          >
            <DesktopIcon kind={item.kind} />
            <span className="flex flex-col pt-px">
              {item.label.map((line) => (
                <span key={line}>{line}</span>
              ))}
            </span>
          </button>
        ))}
      </div>

      <FindDialog />
      <BrowserWindow />
      <OpenDialog />
      <Taskbar />
    </div>
  );
};

export default App;
